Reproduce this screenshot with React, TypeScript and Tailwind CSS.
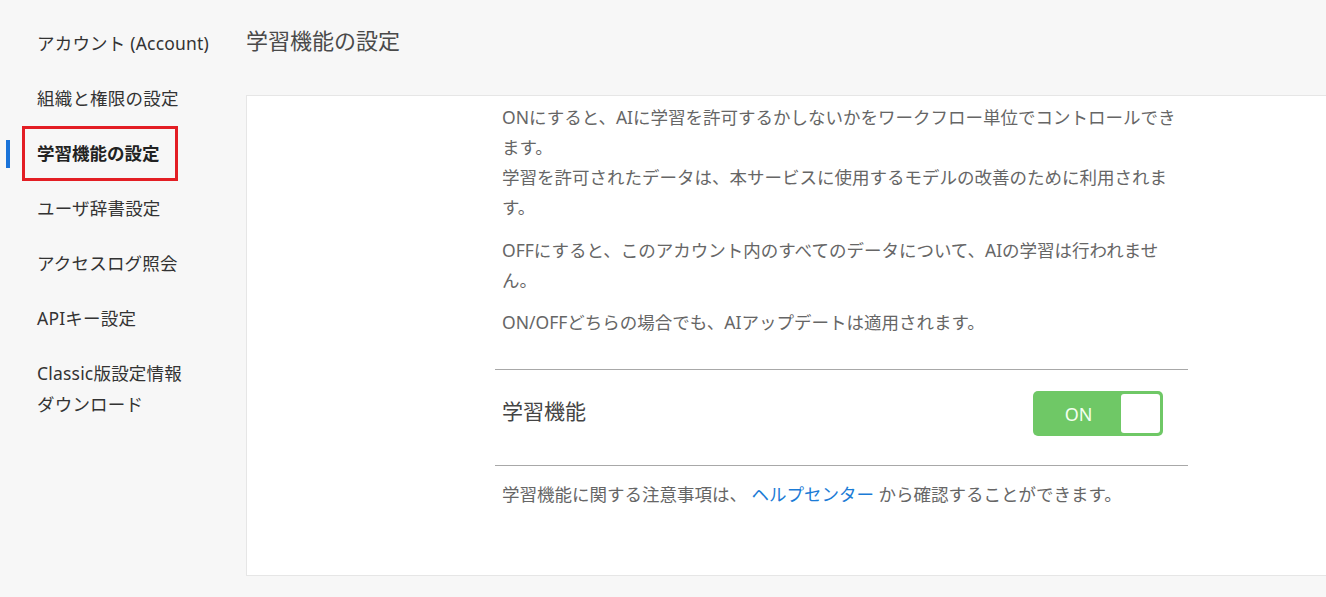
import React from "react";

const items = [
  { label: "アカウント (Account)" },
  { label: "組織と権限の設定" },
  { label: "学習機能の設定", active: true },
  { label: "ユーザ辞書設定" },
  { label: "アクセスログ照会" },
  { label: "APIキー設定" },
  { label: "Classic版設定情報\nダウンロード" },
];

export default function App() {
  return (
    <div
      className="w-full h-[597px] overflow-hidden bg-[#f7f7f7] flex"
      style={{ fontFamily: '"Noto Sans", "Noto Sans CJK JP", sans-serif' }}
    >
      <aside className="w-[246px] shrink-0 pt-[16px]">
        {items.map((it, i) =>
          it.active ? (
            <div key={i} className="relative h-[55px] flex items-center">
              <div className="absolute left-[6px] top-[14px] w-[4px] h-[28px] bg-[#1a73d9]" />
              <div className="ml-[22px] w-[156px] h-[55px] border-[3px] border-[#e31e24] pl-[12px] flex items-center text-[17.5px] font-bold text-[#222]">
                {it.label}
              </div>
            </div>
          ) : (
            <div
              key={i}
              className="pl-[37px] py-[12px] text-[17.5px] tracking-[0.2px] leading-[31px] text-[#333] whitespace-pre-line"
            >
              {it.label}
            </div>
          )
        )}
      </aside>
      <main className="flex-1 min-w-0">
        <h1 className="pt-[24px] h-[56px] text-[22px] leading-[32px] text-[#4a4a4a] font-normal">
          学習機能の設定
        </h1>
        <div className="mt-[39px] w-[1191px] h-[481px] bg-white border border-[#e6e6e6]">
          <div className="ml-[248px] w-[693px] pt-[6px]">
            <div className="pl-[7px] text-[17.5px] leading-[30px] text-[#666] whitespace-nowrap">
              <p>
                ONにすると、AIに学習を許可するかしないかをワークフロー単位でコントロールでき
                <br />
                ます。
                <br />
                学習を許可されたデータは、本サービスに使用するモデルの改善のために利用されま
                <br />
                す。
              </p>
              <p className="mt-[13px]">
                OFFにすると、このアカウント内のすべてのデータについて、AIの学習は行われませ
                <br />
                ん。
              </p>
              <p className="mt-[12px]">ON/OFFどちらの場合でも、AIアップデートは適用されます。</p>
            </div>
            <div className="mt-[32px] border-t border-[#a8a8a8]" />
            <div className="flex items-center justify-between h-[95px] pb-[8px] pl-[7px] pr-[25px]">
              <span className="text-[21px] text-[#444] pb-[3px]">学習機能</span>
              <div className="w-[130px] h-[45px] rounded-[5px] bg-[#6fc866] p-[3px] flex items-center">
                <span className="flex-1 text-center text-[18px] text-[#f3fff0] pt-[1px]">ON</span>
                <div className="w-[39px] h-[39px] rounded-[3px] bg-white" />
              </div>
            </div>
            <div className="border-t border-[#a8a8a8]" />
            <p className="mt-[13px] pl-[7px] text-[17.5px] leading-[30px] text-[#666] whitespace-nowrap">
              学習機能に関する注意事項は、 <span className="text-[#1b7bd6]">ヘルプセンター</span> から確認することができます。
            </p>
          </div>
        </div>
      </main>
    </div>
  );
}
